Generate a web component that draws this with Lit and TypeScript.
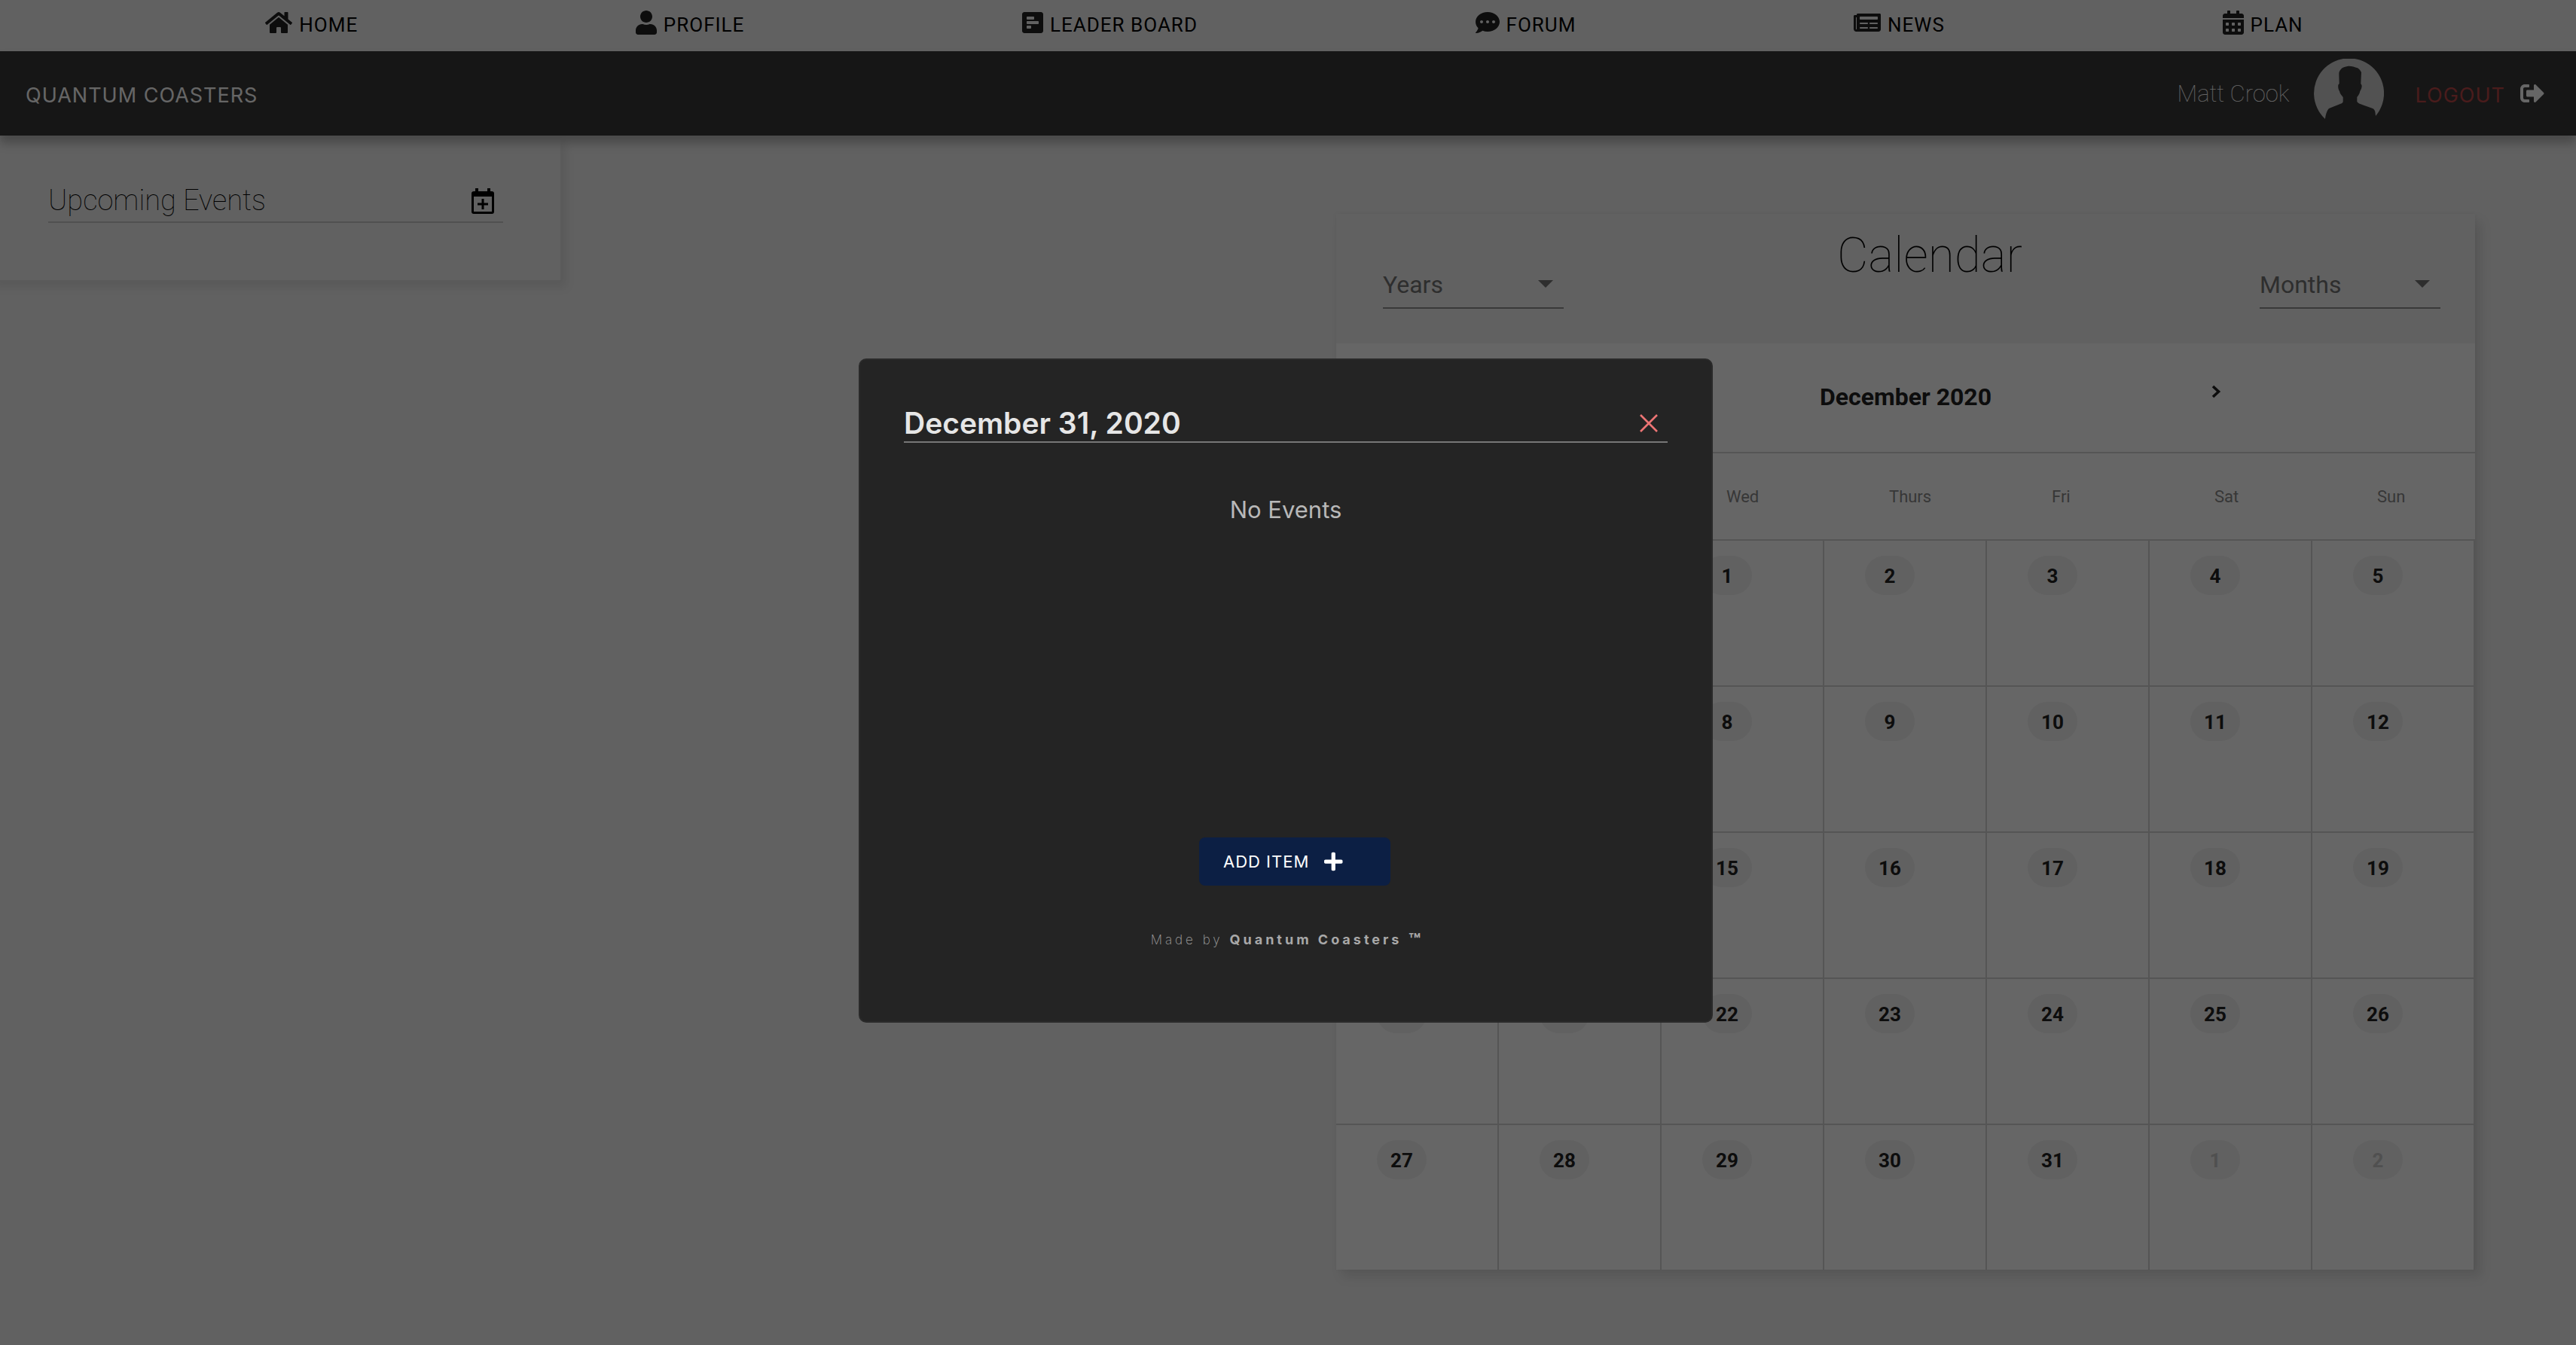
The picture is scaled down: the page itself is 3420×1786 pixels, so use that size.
import { LitElement, html, css, svg, SVGTemplateResult } from "lit";
import { customElement, property } from "lit/decorators.js";

interface IconShape {
  width: number;
  height: number;
  body: SVGTemplateResult;
}

const ICONS: Record<string, IconShape> = {
  home: {
    width: 576,
    height: 512,
    body: svg`<path d="M280.37 148.26L96 300.11V464a16 16 0 0 0 16 16l112.06-.29a16 16 0 0 0 15.92-16V368a16 16 0 0 1 16-16h64a16 16 0 0 1 16 16v95.64a16 16 0 0 0 16 16.05L464 480a16 16 0 0 0 16-16V300L295.67 148.26a12.19 12.19 0 0 0-15.3 0zM571.6 251.47L488 182.56V44.05a12 12 0 0 0-12-12h-56a12 12 0 0 0-12 12v72.61L318.47 43a48 48 0 0 0-61 0L4.34 251.47a12 12 0 0 0-1.6 16.9l25.5 31A12 12 0 0 0 45.15 301l235.22-193.74a12.19 12.19 0 0 1 15.3 0L530.9 301a12 12 0 0 0 16.9-1.6l25.5-31a12 12 0 0 0-1.7-16.93z"/>`,
  },
  user: {
    width: 448,
    height: 512,
    body: svg`<path d="M224 256c70.7 0 128-57.3 128-128S294.7 0 224 0 96 57.3 96 128s57.3 128 128 128zm89.6 32h-16.7c-22.2 10.2-46.9 16-72.9 16s-50.6-5.8-72.9-16h-16.7C60.2 288 0 348.2 0 422.4V464c0 26.5 21.5 48 48 48h352c26.5 0 48-21.5 48-48v-41.6c0-74.2-60.2-134.4-134.4-134.4z"/>`,
  },
  poll: {
    width: 448,
    height: 512,
    body: svg`<path d="M448 432V80c0-26.5-21.5-48-48-48H48C21.5 32 0 53.5 0 80v352c0 26.5 21.5 48 48 48h352c26.5 0 48-21.5 48-48zM112 192c-8.84 0-16-7.16-16-16v-32c0-8.84 7.16-16 16-16h128c8.84 0 16 7.16 16 16v32c0 8.84-7.16 16-16 16H112zm0 96c-8.84 0-16-7.16-16-16v-32c0-8.84 7.16-16 16-16h224c8.84 0 16 7.16 16 16v32c0 8.84-7.16 16-16 16H112zm0 96c-8.84 0-16-7.16-16-16v-32c0-8.84 7.16-16 16-16h64c8.84 0 16 7.16 16 16v32c0 8.84-7.16 16-16 16h-64z"/>`,
  },
  comment: {
    width: 512,
    height: 512,
    body: svg`<path d="M256 32C114.6 32 0 125.1 0 240c0 49.6 21.4 95 57 130.7C44.5 421.1 2.7 466 2.2 466.5c-2.2 2.3-2.8 5.7-1.5 8.7S4.8 480 8 480c66.3 0 116-31.8 140.6-51.4 32.7 12.3 69 19.4 107.4 19.4 141.4 0 256-93.1 256-208S397.4 32 256 32zM128 272c-17.7 0-32-14.3-32-32s14.3-32 32-32 32 14.3 32 32-14.3 32-32 32zm128 0c-17.7 0-32-14.3-32-32s14.3-32 32-32 32 14.3 32 32-14.3 32-32 32zm128 0c-17.7 0-32-14.3-32-32s14.3-32 32-32 32 14.3 32 32-14.3 32-32 32z"/>`,
  },
  newspaper: {
    width: 576,
    height: 512,
    body: svg`<path fill-rule="evenodd" d="M552 64H88c-13.255 0-24 10.745-24 24v8H24c-13.255 0-24 10.745-24 24v272c0 30.928 25.072 56 56 56h472c26.51 0 48-21.49 48-48V88c0-13.255-10.745-24-24-24zM56 400a8 8 0 0 1-8-8V144h16v248a8 8 0 0 1-8 8zm236-16H140c-6.627 0-12-5.373-12-12v-8c0-6.627 5.373-12 12-12h152c6.627 0 12 5.373 12 12v8c0 6.627-5.373 12-12 12zm208 0H348c-6.627 0-12-5.373-12-12v-8c0-6.627 5.373-12 12-12h152c6.627 0 12 5.373 12 12v8c0 6.627-5.373 12-12 12zm-208-96H140c-6.627 0-12-5.373-12-12v-8c0-6.627 5.373-12 12-12h152c6.627 0 12 5.373 12 12v8c0 6.627-5.373 12-12 12zm208 0H348c-6.627 0-12-5.373-12-12v-8c0-6.627 5.373-12 12-12h152c6.627 0 12 5.373 12 12v8c0 6.627-5.373 12-12 12zm0-96H140c-6.627 0-12-5.373-12-12v-40c0-6.627 5.373-12 12-12h360c6.627 0 12 5.373 12 12v40c0 6.627-5.373 12-12 12z"/>`,
  },
  calendar: {
    width: 448,
    height: 512,
    body: svg`<path fill-rule="evenodd" d="M0 464c0 26.5 21.5 48 48 48h352c26.5 0 48-21.5 48-48V192H0v272zM320 268c0-6.6 5.4-12 12-12h40c6.6 0 12 5.4 12 12v40c0 6.6-5.4 12-12 12h-40c-6.6 0-12-5.4-12-12zM320 396c0-6.6 5.4-12 12-12h40c6.6 0 12 5.4 12 12v40c0 6.6-5.4 12-12 12h-40c-6.6 0-12-5.4-12-12zM192 268c0-6.6 5.4-12 12-12h40c6.6 0 12 5.4 12 12v40c0 6.6-5.4 12-12 12h-40c-6.6 0-12-5.4-12-12zM192 396c0-6.6 5.4-12 12-12h40c6.6 0 12 5.4 12 12v40c0 6.6-5.4 12-12 12h-40c-6.6 0-12-5.4-12-12zM64 268c0-6.6 5.4-12 12-12h40c6.6 0 12 5.4 12 12v40c0 6.6-5.4 12-12 12H76c-6.6 0-12-5.4-12-12zM64 396c0-6.6 5.4-12 12-12h40c6.6 0 12 5.4 12 12v40c0 6.6-5.4 12-12 12H76c-6.6 0-12-5.4-12-12zM400 64h-48V16c0-8.8-7.2-16-16-16h-32c-8.8 0-16 7.2-16 16v48H160V16c0-8.8-7.2-16-16-16h-32c-8.8 0-16 7.2-16 16v48H48C21.5 64 0 85.5 0 112v48h448v-48c0-26.5-21.5-48-48-48z"/>`,
  },
  signOut: {
    width: 512,
    height: 512,
    body: svg`<path d="M497 273L329 441c-15 15-41 4.5-41-17v-96H152c-13.3 0-24-10.7-24-24v-96c0-13.3 10.7-24 24-24h136V88c0-21.4 25.9-32 41-17l168 168c9.3 9.4 9.3 24.6 0 34zM192 436v-40c0-6.6-5.4-12-12-12H96c-17.7 0-32-14.3-32-32V160c0-17.7 14.3-32 32-32h84c6.6 0 12-5.4 12-12V76c0-6.6-5.4-12-12-12H96c-53 0-96 43-96 96v192c0 53 43 96 96 96h84c6.6 0 12-5.4 12-12z"/>`,
  },
  plus: {
    width: 448,
    height: 512,
    body: svg`<path d="M416 208H272V64c0-17.67-14.33-32-32-32h-32c-17.67 0-32 14.33-32 32v144H32c-17.67 0-32 14.33-32 32v32c0 17.67 14.33 32 32 32h144v144c0 17.67 14.33 32 32 32h32c17.67 0 32-14.33 32-32V304h144c17.67 0 32-14.33 32-32v-32c0-17.67-14.33-32-32-32z"/>`,
  },
  addEvent: {
    width: 30,
    height: 34,
    body: svg`<path fill-rule="evenodd" d="M5 0h4v4h12V0h4v4h2a3 3 0 0 1 3 3v24a3 3 0 0 1-3 3H3a3 3 0 0 1-3-3V7a3 3 0 0 1 3-3h2zM3 11v20h24V11zM13.5 14h3v5.5H22v3h-5.5V28h-3v-5.5H8v-3h5.5z"/>`,
  },
  next: {
    width: 14,
    height: 18,
    body: svg`<path d="M3 2l7.5 7L3 16" fill="none" stroke="currentColor" stroke-width="3.6"/>`,
  },
  previous: {
    width: 14,
    height: 18,
    body: svg`<path d="M11 2L3.5 9l7.5 7" fill="none" stroke="currentColor" stroke-width="3.6"/>`,
  },
  close: {
    width: 24,
    height: 24,
    body: svg`<path d="M1 1l22 22M23 1L1 23" fill="none" stroke="currentColor" stroke-width="2.6"/>`,
  },
  caret: {
    width: 20,
    height: 10,
    body: svg`<path d="M0 0h20L10 10z"/>`,
  },
  avatar: {
    width: 93,
    height: 93,
    body: svg`<path d="M15 80A46.5 46.5 0 1 1 82 76L81.3 70.3C80.5 68 80 67 78 66L64.7 61.3C61 60 58.5 59 57.3 57V51C59.5 48 61 46 61.3 43C63.5 40 64 36 63.3 34.7L62.3 33L63 18C61 14.5 60 13.5 58 12.3C54 11 50 9.5 45.7 9.7C41 10.5 38 11.5 36 13.7C34 16 33.3 18 33.3 20L33.7 33L32.3 34.7C32 38 32.5 41 34 43C34.5 46 36.5 48.5 38.7 51V57C38 59 37 59.5 35 60L20 66C17 69 15.5 75 15 80z"/>`,
  },
};

@customElement("app-icon")
export class AppIcon extends LitElement {
  @property() name = "home";

  static styles = css`
    :host {
      display: inline-flex;
      flex: none;
      height: 32px;
    }
    svg {
      display: block;
      height: 100%;
      width: auto;
      fill: currentColor;
    }
  `;

  render() {
    const icon = ICONS[this.name];
    return html`<svg
      viewBox="0 0 ${icon.width} ${icon.height}"
      width=${icon.width}
      height=${icon.height}
      aria-hidden="true"
    >
      ${icon.body}
    </svg>`;
  }
}

@customElement("site-header")
export class SiteHeader extends LitElement {
  private links = [
    { icon: "home", label: "HOME" },
    { icon: "user", label: "PROFILE" },
    { icon: "poll", label: "LEADER BOARD" },
    { icon: "comment", label: "FORUM" },
    { icon: "newspaper", label: "NEWS" },
    { icon: "calendar", label: "PLAN" },
  ];

  static styles = css`
    :host {
      display: block;
      position: relative;
      z-index: 1;
    }
    .links {
      display: flex;
      justify-content: space-around;
      padding: 0 178px 0 168px;
      height: 68px;
    }
    .link {
      display: flex;
      align-items: flex-start;
      gap: 9px;
      padding-top: 14px;
      color: #000;
      font: 400 26px/38px Roboto, sans-serif;
      letter-spacing: 1px;
      text-decoration: none;
    }
    .link app-icon {
      color: #212121;
    }
    .bar {
      display: flex;
      align-items: center;
      height: 112px;
      padding: 0 42px 0 34px;
      background: #373737;
      box-shadow: 0 10px 12px rgba(0, 0, 0, 0.25);
      color: #fff;
    }
    .brand {
      margin-right: auto;
      padding-top: 6px;
      font: 400 27px/32px Inter, sans-serif;
      letter-spacing: 1px;
      color: #fff;
      text-decoration: none;
    }
    .user {
      padding-top: 2px;
      font: 100 31px/40px Roboto, sans-serif;
    }
    .avatar {
      height: 93px;
      margin: 0 42px 0 32px;
      color: #cdcdcd;
    }
    .logout {
      display: flex;
      align-items: center;
      gap: 20px;
      padding: 0;
      border: 0;
      background: none;
      color: #b94646;
      font: 400 27px/32px Inter, sans-serif;
      letter-spacing: 1px;
    }
    .logout span {
      padding-top: 6px;
    }
    .logout app-icon {
      color: #fff;
    }
  `;

  render() {
    return html`
      <nav class="links">
        ${this.links.map(
          (l) => html`<a class="link" href="#"><app-icon name=${l.icon}></app-icon>${l.label}</a>`
        )}
      </nav>
      <header class="bar">
        <a class="brand" href="#">QUANTUM COASTERS</a>
        <span class="user">Matt Crook</span>
        <app-icon class="avatar" name="avatar"></app-icon>
        <button class="logout" type="button">
          <span>LOGOUT</span><app-icon name="signOut"></app-icon>
        </button>
      </header>
    `;
  }
}

@customElement("upcoming-events")
export class UpcomingEvents extends LitElement {
  static styles = css`
    :host {
      display: block;
      margin-left: -16px;
      padding: 58px 76px 76px 80px;
      background: #f2f2f2;
      box-shadow: 8px 10px 12px rgba(0, 0, 0, 0.08);
    }
    .head {
      display: flex;
      align-items: center;
      justify-content: space-between;
      padding-right: 12px;
      border-bottom: 2px solid #c8c8c8;
    }
    .title {
      margin: 0;
      font: 100 38px/56px Roboto, sans-serif;
      color: #000;
    }
    .add {
      display: flex;
      padding: 2px 0 0;
      border: 0;
      background: none;
      color: #000;
    }
    .add app-icon {
      height: 34px;
    }
  `;

  render() {
    return html`<div class="head">
      <h2 class="title">Upcoming Events</h2>
      <button class="add" type="button" aria-label="Add event">
        <app-icon name="addEvent"></app-icon>
      </button>
    </div>`;
  }
}

@customElement("month-calendar")
export class MonthCalendar extends LitElement {
  private weekdays = ["Mon", "Tues", "Wed", "Thurs", "Fri", "Sat", "Sun"];

  private get weeks() {
    const days = [
      { day: 29, muted: true },
      { day: 30, muted: true },
      ...Array.from({ length: 31 }, (_, i) => ({ day: i + 1, muted: false })),
      { day: 1, muted: true },
      { day: 2, muted: true },
    ];
    return [0, 1, 2, 3, 4].map((w) => days.slice(w * 7, w * 7 + 7));
  }

  static styles = css`
    :host {
      display: block;
      background: #fff;
      box-shadow:
        8px 10px 14px rgba(0, 0, 0, 0.1),
        0 0 6px rgba(0, 0, 0, 0.05);
      font-family: Roboto, sans-serif;
      color: #212121;
    }
    .head {
      display: flex;
      align-items: flex-start;
      height: 172px;
      padding: 0 46px 0 62px;
      background: #f2f2f2;
    }
    .title {
      flex: 1;
      margin: 0;
      padding: 20px 0 0 48px;
      font: 100 64px/72px Roboto, sans-serif;
      color: #000;
      text-align: center;
    }
    .field {
      display: grid;
      align-items: center;
      width: 240px;
      margin-top: 62px;
      border-bottom: 2px solid #909090;
      color: #737373;
    }
    .field select {
      grid-area: 1 / 1;
      width: 100%;
      height: 62px;
      padding: 2px 0 0;
      border: 0;
      background: none;
      appearance: none;
      color: inherit;
      font: 400 32px/40px Roboto, sans-serif;
    }
    .field app-icon {
      grid-area: 1 / 1;
      justify-self: end;
      height: 10px;
      margin-right: 14px;
      pointer-events: none;
    }
    .month {
      display: flex;
      align-items: center;
      justify-content: center;
      gap: 291px;
      height: 144px;
    }
    .name {
      margin: 0;
      padding-bottom: 2px;
      font: 700 32px/40px Roboto, sans-serif;
    }
    .step {
      display: flex;
      padding: 0 0 16px;
      border: 0;
      background: none;
      color: #212121;
    }
    .step app-icon {
      height: 18px;
    }
    table {
      width: 100%;
      table-layout: fixed;
      border-collapse: separate;
      border-spacing: 0;
    }
    th {
      height: 112px;
      padding: 2px 0 0 86px;
      border-top: 2px solid #d4d4d4;
      text-align: left;
      font: 400 22px/32px Roboto, sans-serif;
      color: #8a8a8a;
    }
    td {
      height: 172px;
      padding: 20px 0 0 54px;
      border-top: 2px solid #d4d4d4;
      border-right: 2px solid #d4d4d4;
      vertical-align: top;
    }
    .day {
      display: block;
      width: 66px;
      height: 52px;
      padding: 2px 0 0;
      border: 0;
      border-radius: 26px;
      background: #f2f2f2;
      color: #212121;
      font: 700 26px/50px Roboto, sans-serif;
    }
    .day.muted {
      color: #c8c8c8;
    }
  `;

  render() {
    return html`
      <div class="head">
        <div class="field">
          <select aria-label="Years"><option>Years</option></select>
          <app-icon name="caret"></app-icon>
        </div>
        <h2 class="title">Calendar</h2>
        <div class="field">
          <select aria-label="Months"><option>Months</option></select>
          <app-icon name="caret"></app-icon>
        </div>
      </div>
      <div class="month">
        <button class="step" type="button" aria-label="Previous month">
          <app-icon name="previous"></app-icon>
        </button>
        <h3 class="name">December 2020</h3>
        <button class="step" type="button" aria-label="Next month">
          <app-icon name="next"></app-icon>
        </button>
      </div>
      <table>
        <thead>
          <tr>
            ${this.weekdays.map((d) => html`<th scope="col">${d}</th>`)}
          </tr>
        </thead>
        <tbody>
          ${this.weeks.map(
            (week) => html`<tr>
              ${week.map(
                (d) => html`<td>
                  <button type="button" class="day ${d.muted ? "muted" : ""}">${d.day}</button>
                </td>`
              )}
            </tr>`
          )}
        </tbody>
      </table>
    `;
  }
}

@customElement("day-dialog")
export class DayDialog extends LitElement {
  static styles = css`
    :host {
      position: fixed;
      inset: 0;
      z-index: 10;
      display: flex;
      align-items: center;
      justify-content: center;
      padding: 48px 6px 0 0;
      box-sizing: border-box;
      background: rgba(0, 0, 0, 0.6);
      font-family: Inter, sans-serif;
    }
    .dialog {
      display: flex;
      flex-direction: column;
      width: 1014px;
      padding: 58px 58px 92px;
      border: 2px solid #2a2a2a;
      border-radius: 10px;
      background: #242424;
    }
    .head {
      display: flex;
      align-items: center;
      justify-content: space-between;
      padding-right: 13px;
      border-bottom: 2px solid #777;
    }
    .title {
      margin: 0;
      padding-top: 2px;
      font: 600 39px/48px Inter, sans-serif;
      color: #e6e6e6;
    }
    .close {
      display: flex;
      padding: 2px 0 0;
      border: 0;
      background: none;
      color: #ec7474;
    }
    .close app-icon {
      height: 24px;
    }
    .empty {
      margin: 68px 0 0;
      min-height: 456px;
      font: 400 31px/42px Inter, sans-serif;
      color: #b8b8b8;
      text-align: center;
    }
    .add {
      display: flex;
      align-items: center;
      align-self: center;
      gap: 20px;
      width: 254px;
      height: 64px;
      margin-left: 24px;
      padding: 0 32px;
      border: 0;
      border-radius: 8px;
      background: #0c1f44;
      color: #fff;
      font: 400 22px/32px Inter, sans-serif;
      letter-spacing: 1px;
    }
    .add app-icon {
      height: 28px;
    }
    .credit {
      margin: 56px 0 0;
      font: 200 17px/32px Inter, sans-serif;
      letter-spacing: 4px;
      color: #a0a0a0;
      text-align: center;
    }
    .credit strong {
      font-size: 18px;
      font-weight: 700;
      color: #a8a8a8;
    }
    .mark {
      font-size: 26px;
      line-height: 26px;
      letter-spacing: 0;
      vertical-align: middle;
    }
  `;

  render() {
    return html`<section class="dialog" role="dialog" aria-modal="true" aria-labelledby="day">
      <div class="head">
        <h2 class="title" id="day">December 31, 2020</h2>
        <button class="close" type="button" aria-label="Close">
          <app-icon name="close"></app-icon>
        </button>
      </div>
      <p class="empty">No Events</p>
      <button class="add" type="button">ADD ITEM <app-icon name="plus"></app-icon></button>
      <p class="credit">Made by <strong>Quantum Coasters <span class="mark">™</span></strong></p>
    </section>`;
  }
}

@customElement("app-root")
export class AppRoot extends LitElement {
  static styles = css`
    :host {
      display: block;
      min-height: 100vh;
      background: #f2f2f2;
    }
    .page {
      display: grid;
      grid-template-columns: 744fr 1030fr 1512fr 134fr;
      align-items: start;
    }
    month-calendar {
      grid-column: 3;
      margin: 104px 0 100px;
    }
  `;

  render() {
    return html`
      <site-header></site-header>
      <main class="page">
        <upcoming-events></upcoming-events>
        <month-calendar></month-calendar>
      </main>
      <day-dialog></day-dialog>
    `;
  }
}
